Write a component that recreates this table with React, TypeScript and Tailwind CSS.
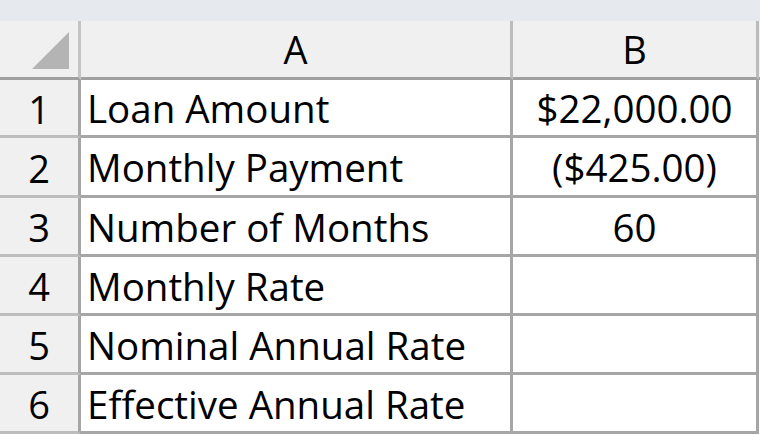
const rows = [
  { n: 1, label: "Loan Amount", value: "$22,000.00", h: "h-[58px]" },
  { n: 2, label: "Monthly Payment", value: "($425.00)", h: "h-[60px]" },
  { n: 3, label: "Number of Months", value: "60", h: "h-[59px]" },
  { n: 4, label: "Monthly Rate", value: "", h: "h-[59px]" },
  { n: 5, label: "Nominal Annual Rate", value: "", h: "h-[59px]" },
  { n: 6, label: "Effective Annual Rate", value: "", h: "h-[59px]" },
];

export default function App() {
  return (
    <div
      className="w-[760px] h-[435px] overflow-hidden bg-white text-black"
      style={{ fontFamily: '"Open Sans", "Noto Sans", sans-serif' }}
    >
      {/* strip above the column headers */}
      <div className="h-[21px] bg-[#e6eaee]" />

      <div className="flex bg-[#f0f0f0] h-[59px]">
        <div className="w-[81px] shrink-0 flex items-end justify-end pr-[9px] pb-[8px] border-r-[3px] border-b-[3px] border-r-[#c4c4c4] border-b-[#a0a0a0]">
          <svg width="37" height="37" viewBox="0 0 37 37">
            <polygon points="37,0 37,37 0,37" fill="#b4b4b4" />
          </svg>
        </div>
        <div className="w-[432px] shrink-0 flex items-center justify-center text-[38px] leading-none border-r-[3px] border-b-[3px] border-r-[#bcbcbc] border-b-[#a0a0a0]">
          A
        </div>
        <div className="w-[246px] shrink-0 flex items-center justify-center text-[38px] leading-none border-r-[3px] border-b-[3px] border-r-[#bcbcbc] border-b-[#a0a0a0]">
          B
        </div>
        <div className="flex-1 border-b-[3px] border-b-[#a0a0a0]" />
      </div>

      {rows.map((r) => (
        <div key={r.n} className={`flex ${r.h}`}>
          <div className="w-[81px] shrink-0 bg-[#f0f0f0] flex items-center justify-center pt-[2px] text-[38px] leading-none border-r-[3px] border-b-[3px] border-r-[#a6a6a6] border-b-[#bdbdbd]">
            {r.n}
          </div>
          <div className="w-[432px] shrink-0 flex items-center pl-[6px] pt-[2px] text-[38.5px] leading-none border-r-[3px] border-b-[3px] border-[#a6a6a6] whitespace-nowrap">
            {r.label}
          </div>
          <div className="w-[246px] shrink-0 flex items-center justify-center pt-[2px] text-[38.5px] leading-none border-r-[3px] border-b-[3px] border-[#a6a6a6]">
            {r.value}
          </div>
        </div>
      ))}
    </div>
  );
}
